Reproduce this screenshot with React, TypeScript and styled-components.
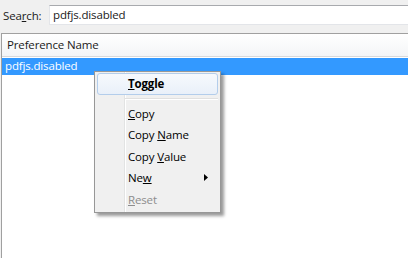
import React from "react";
import styled, { createGlobalStyle } from "styled-components";

const Global = createGlobalStyle`
  html, body { margin: 0; padding: 0; }
  body {
    background: #f0f0f0;
    font-family: "Open Sans", "Noto Sans", "Liberation Sans", sans-serif;
    font-size: 11.5px;
    letter-spacing: -0.15px;
    color: #000;
    overflow: hidden;
  }
`;

const Page = styled.div`
  position: relative;
  width: 408px;
  height: 258px;
  display: flex;
  flex-direction: column;
  background: #f0f0f0;
  overflow: hidden;
`;

const SearchBar = styled.div`
  height: 33px;
  box-sizing: border-box;
  display: flex;
  align-items: flex-start;
  padding: 5px 0 0 3px;
`;

const SearchLabel = styled.label`
  width: 46px;
  line-height: 21px;
  color: #1a1a1a;
`;

const SearchInput = styled.div`
  flex: 1;
  height: 20px;
  box-sizing: border-box;
  background: #fff;
  border: 1px solid #e3e5e9;
  border-top-color: #a8aaae;
  border-right: none;
  padding-left: 3px;
  line-height: 18px;
  color: #1a1a1a;
`;

const Tree = styled.div`
  flex: 1;
  margin-left: 1px;
  background: #fff;
  border-top: 1px solid #a0a0a0;
  border-left: 1px solid #a0a0a0;
  display: flex;
  flex-direction: column;
`;

const Header = styled.div`
  height: 23px;
  box-sizing: border-box;
  border-bottom: 1px solid #d8d9db;
  background: linear-gradient(#ffffff, #f4f5f7);
  padding-left: 5px;
  line-height: 22px;
  color: #1a1a1a;
`;

const Rows = styled.div`
  padding-top: 1px;
`;

const Row = styled.div<{ $selected?: boolean }>`
  height: 17px;
  line-height: 16px;
  padding-left: 3px;
  background: ${(p) => (p.$selected ? "#3399ff" : "transparent")};
  color: ${(p) => (p.$selected ? "#fff" : "#000")};
`;

const Menu = styled.div`
  position: absolute;
  left: 94px;
  top: 71px;
  width: 127px;
  height: 142px;
  box-sizing: border-box;
  border: 1px solid #979797;
  padding-top: 1px;
  background:
    linear-gradient(
      to right,
      transparent 29px,
      #e2e3e3 29px,
      #e2e3e3 30px,
      #ffffff 30px,
      #ffffff 31px,
      transparent 31px
    ),
    #f0f0f0;
  box-shadow: 3px 3px 3px rgba(0, 0, 0, 0.4);
  display: flex;
  flex-direction: column;
`;

const Item = styled.div<{ $active?: boolean; $disabled?: boolean; $bold?: boolean }>`
  height: 21.5px;
  box-sizing: border-box;
  margin: 0 2px;
  padding: 0 9px 0 30px;
  display: flex;
  align-items: center;
  border: 1px solid ${(p) => (p.$active ? "#b3cdeb" : "transparent")};
  border-radius: 3px;
  background: ${(p) =>
    p.$active ? "linear-gradient(#f6f9fd, #e9f0f9)" : "transparent"};
  color: ${(p) => (p.$disabled ? "#8d8d8d" : "#000")};
  font-weight: ${(p) => (p.$bold ? 700 : 400)};
  white-space: nowrap;

  u {
    text-decoration: underline;
    text-underline-offset: 1px;
  }
`;

const Separator = styled.div`
  height: 8px;
  display: flex;
  flex-direction: column;
  justify-content: center;
  padding-left: 30px;
  padding-right: 2px;

  &::before {
    content: "";
    display: block;
    height: 1px;
    background: #e0e0e0;
    border-bottom: 1px solid #ffffff;
  }
`;

const ArrowIcon = styled.svg`
  margin-left: auto;
  display: block;
`;

export default function App() {
  return (
    <>
      <Global />
      <Page>
        <SearchBar>
          <SearchLabel>
            Sea<u>r</u>ch:
          </SearchLabel>
          <SearchInput>pdfjs.disabled</SearchInput>
        </SearchBar>
        <Tree>
          <Header>Preference Name</Header>
          <Rows>
            <Row $selected>pdfjs.disabled</Row>
          </Rows>
        </Tree>
        <Menu>
          <Item $active $bold>
            <span>
              <u>T</u>oggle
            </span>
          </Item>
          <Separator />
          <Item>
            <span>
              <u>C</u>opy
            </span>
          </Item>
          <Item>
            <span>
              Copy <u>N</u>ame
            </span>
          </Item>
          <Item>
            <span>
              Copy <u>V</u>alue
            </span>
          </Item>
          <Item>
            <span>
              Ne<u>w</u>
            </span>
            <ArrowIcon width="4" height="7" viewBox="0 0 4 7">
              <polygon points="0,0 4,3.5 0,7" fill="#000" />
            </ArrowIcon>
          </Item>
          <Item $disabled>
            <span>
              <u>R</u>eset
            </span>
          </Item>
        </Menu>
      </Page>
    </>
  );
}
